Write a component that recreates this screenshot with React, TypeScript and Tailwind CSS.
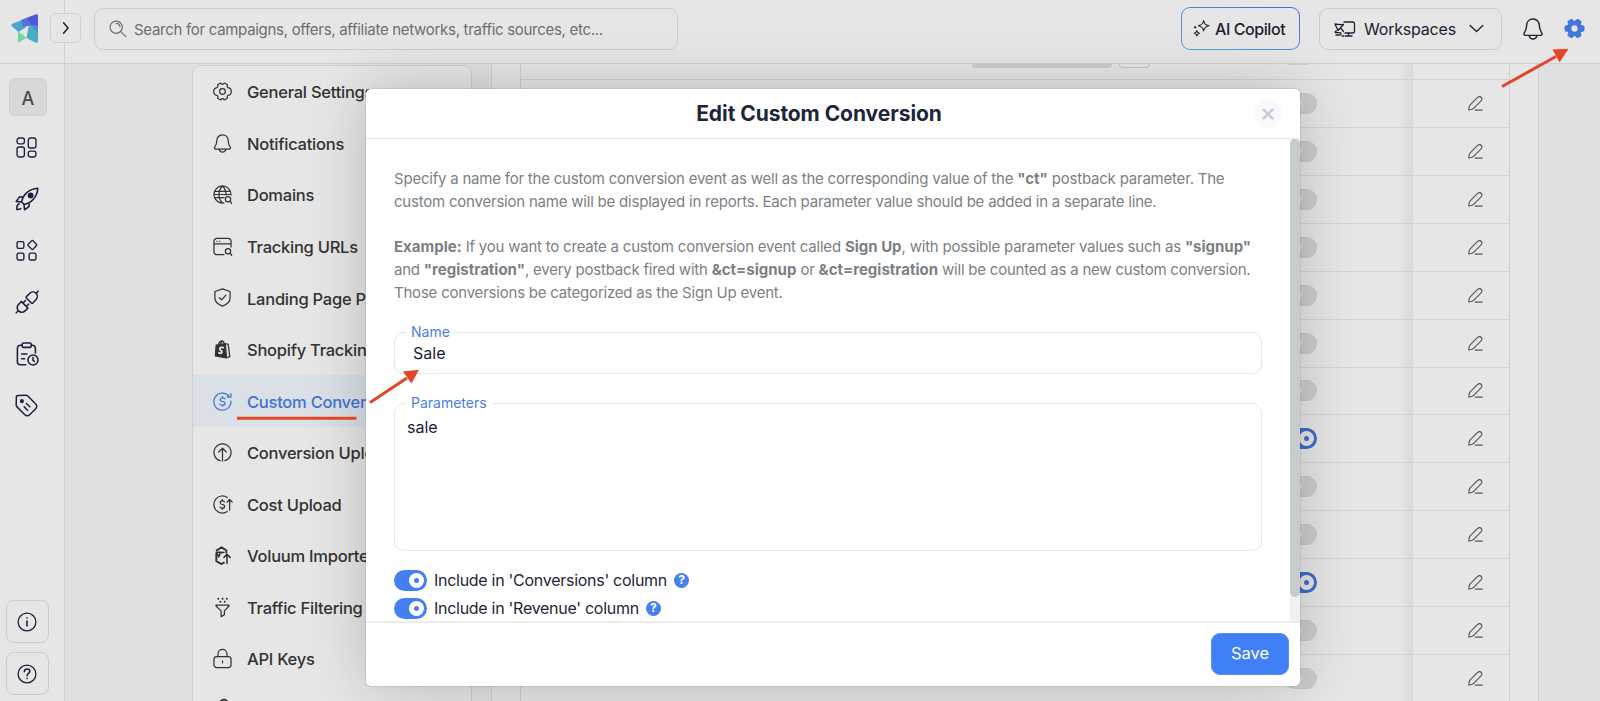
import React from 'react'
import clsx from 'clsx'

type IconProps = { className?: string; children?: React.ReactNode }

function Icon({ className = 'h-5 w-5', children }: IconProps) {
  return (
    <svg
      viewBox="0 0 20 20"
      fill="none"
      stroke="currentColor"
      strokeWidth="1.3"
      strokeLinecap="round"
      strokeLinejoin="round"
      className={clsx('shrink-0 overflow-visible', className)}
    >
      {children}
    </svg>
  )
}

const Bell = ({ className }: IconProps) => (
  <Icon className={className}>
    <path d="M10 .9c-3.500 0-5.800 2.600-5.800 6 0 3.600-1.200 5.100-2.200 6.800-.6 1.100-.1 2.100 1.100 2.100h13.800c1.200 0 1.700-1 1.100-2.100-1-1.700-2.200-3.200-2.200-6.800 0-3.400-2.300-6-5.800-6Z" />
    <path d="M6.500 16.200c.5 1.800 1.800 2.900 3.500 2.900s3-1.100 3.500-2.900" />
  </Icon>
)

const Pencil = () => (
  <svg viewBox="0 0 15 15" fill="none" stroke="currentColor" strokeWidth="1.15" strokeLinecap="round" strokeLinejoin="round" className="h-[15px] w-[15px] text-[#555]">
    <path d="M.8 14c.1-2 .1-3.700 1.200-4.900L9.300 1.700c1.200-1.200 2.800-1.400 3.800-.5 1.100 1 1 2.500-.1 3.700l-7.300 7.400C4.500 13.500 2.800 13.900.8 14Z" />
    <path d="M7.300 14.100h6.900" />
  </svg>
)

const menu = [
  {
    label: 'General Settings',
    icon: (
      <>
        <path d="M7.700 1.300h.7c.7 1.500 2.500 1.500 3.200 0h.7l2.500 1.400.4.500c-.9 1.500 0 3 1.700 3 .6.200 1.900 1.200 2.300 2.700v2.200c-.4 1.500-1.700 2.500-2.300 2.700-1.700 0-2.600 1.500-1.700 3l-.4.500-2.500 1.400h-.7c-.7-1.500-2.500-1.500-3.200 0h-.7l-2.500-1.400-.4-.5c.9-1.500 0-3-1.700-3-.6-.2-1.900-1.200-2.300-2.700V8.900c.4-1.500 1.700-2.500 2.300-2.700 1.700 0 2.600-1.500 1.700-3l.4-.5 2.500-1.400Z" />
        <circle cx="10" cy="10" r="3" />
      </>
    ),
  },
  {
    label: 'Notifications',
    icon: (
      <>
        <path d="M10 .8c-3.600 0-6 2.700-6 6.200 0 3.500-1.200 5-2.200 6.700-.6 1.100-.1 2.100 1.100 2.100h14.200c1.200 0 1.700-1 1.100-2.100C17.200 12 16 10.500 16 7c0-3.500-2.400-6.200-6-6.200Z" />
        <path d="M6.500 16.200c.5 1.800 1.800 2.900 3.500 2.900s3-1.100 3.500-2.900" />
      </>
    ),
  },
  {
    label: 'Domains',
    icon: (
      <>
        <path d="M11.500 18.900A9 9 0 1 1 19 10.500M10 1c-5 5-5 13 0 18M10 1c2.500 2.500 3.800 5.700 3.800 9.500M2 6.700h16M2 13.300h9.500M1 10h18" />
        <circle cx="15.800" cy="15" r="2.800" />
        <path d="m18 17.200 1.600 2" />
      </>
    ),
  },
  {
    label: 'Tracking URLs',
    icon: (
      <>
        <path d="M19 10.500V4.500a3 3 0 0 0-3-3H4a3 3 0 0 0-3 3v11a3 3 0 0 0 3 3h7.500M1 7.300h18M4 4.500h.2M7 4.500h.2" />
        <circle cx="15.800" cy="15" r="2.800" />
        <path d="m18 17.200 1.600 2" />
      </>
    ),
  },
  {
    label: 'Landing Page Protection',
    icon: (
      <>
        <path d="m10 1 8 2.700v6.800c0 4.200-3.600 7-8 8.500-4.400-1.500-8-4.300-8-8.500V3.700L10 1Z" />
        <path d="m6.700 10.200 2.400 2.300 4.400-5" />
      </>
    ),
  },
  {
    label: 'Shopify Tracking',
    icon: (
      <>
        <path d="m3.300 5.300 9.700-1.500 1.200 15-11.700-2Z" fill="currentColor" />
        <path d="m14 4 2 .6 1.700 12.900-3 1M5.800 4.500C6.500 2.300 8 1 9.500 1s2 1.500 2.300 2.800M8 4c.3-1.600 1.500-2.600 2.700-2.200" />
        <path d="M10.800 8c-4-.8-4.700 1.700-2.600 3 2.400 1.500.8 4-2 2.500" stroke="#e6e6e6" strokeWidth="1.800" />
      </>
    ),
  },
  {
    label: 'Custom Conversions',
    active: true,
    icon: (
      <path d="M16.700 4.200A9 9 0 1 0 18.900 9.500M18.800 1.700v3.800h-3.900M12.600 7.200c-.7-.8-1.600-1-2.600-1-3.300 0-3.300 3.500 0 3.800 3.500.3 3.500 3.800 0 3.800-1.100 0-2-.3-2.700-1.100M10 4.800v1.400M10 13.800v1.400" />
    ),
  },
  {
    label: 'Conversion Upload',
    icon: <path d="M7.500 18.600a9 9 0 1 1 5 0M10 19V6M6 9.500l4-4 4 4" />,
  },
  {
    label: 'Cost Upload',
    icon: <path d="M15 2.600A9 9 0 1 0 15 17.400M17.500 16V5M14.800 7.500l2.700-2.800 2.700 2.800M12 7.200c-.7-.8-1.300-1-2.200-1-3 0-3 3.500 0 3.800 3.200.3 3.200 3.800 0 3.800-1 0-1.700-.3-2.400-1.100M9.800 4.800v1.400M9.800 13.800v1.400" />,
  },
  {
    label: 'Voluum Importer',
    icon: (
      <>
        <path d="m4 4.500 5-3 5 3v2.500M3.500 8v8l5.500 3 2.500-1.500" strokeWidth="2" />
        <path d="m3.500 6.500 2.500 5 1.500-4 4-.8M4 6.500h5M14.700 18.500V9M11.500 12l3.200-3.200L18 12" strokeWidth="1.600" />
      </>
    ),
  },
  {
    label: 'Traffic Filtering',
    icon: (
      <>
        <path d="M3.500 7.500h13c.5 0 .6.500.3.900L12 13.500v4l-3.500 2.200v-6.200L3.200 8.400c-.3-.4-.2-.9.300-.9Z" />
        <path d="M5.500.8h.1M10 .8h.1M14.500.8h.1M7.700 4h.1M12.300 4h.1" strokeWidth="2" />
      </>
    ),
  },
  {
    label: 'API Keys',
    icon: (
      <>
        <rect x="1" y="8" width="18" height="11.600" rx="3" />
        <path d="M5.300 8V5.200a4.700 4.700 0 0 1 9.400 0V8M10 12.500v2" />
      </>
    ),
  },
  {
    label: '',
    icon: <circle cx="11.500" cy="2.500" r="4" strokeWidth="1.800" />,
  },
]

const navIcons = [
  <Icon key="dash" className="h-[21px] w-[21px]">
    <rect x="1" y="1" width="7" height="5.500" rx="2" />
    <rect x="1" y="9.500" width="7" height="9.500" rx="2" />
    <rect x="11.700" y="1" width="7.300" height="9.500" rx="2" />
    <rect x="11.700" y="13.500" width="7.300" height="5.500" rx="2" />
  </Icon>,
  <Icon key="rocket" className="h-6 w-6">
    <path d="M5.500 12.500c1-6 6-11 13.500-11.500-.5 7.500-5.500 12.500-11.500 13.500ZM6.200 8.300 3.800 8.200 1 12l4.500.5M11.700 13.800l.1 2.400L8 19l-.5-4.500M3.500 14c-2 .8-2.200 2.500-2 4.700 1.700.1 2.600-.2 3.300-.8" />
    <circle cx="13" cy="7" r="1.800" fill="currentColor" />
  </Icon>,
  <Icon key="apps" className="h-[21px] w-[21px]">
    <rect x="1" y="1.500" width="6.500" height="6.500" rx="1.500" />
    <rect x="1" y="12.500" width="6.500" height="6.500" rx="1.500" />
    <rect x="12.500" y="12.500" width="6.500" height="6.500" rx="1.500" />
    <path d="m15 .8-3.400 3.300c-.4.4-.4.9 0 1.300L15 8.700c.4.400 1 .4 1.400 0l3-3.300c.4-.4.4-.9 0-1.300l-3-3.300c-.4-.4-1-.4-1.400 0Z" />
  </Icon>,
  <Icon key="plug" className="h-6 w-6">
    <path d="M9.500 5.500 12.400 2.700c1.700-1.600 4-1.200 5.200 0s1.500 3.500 0 5.200L14.900 10.800c-.4.400-.8.400-1.200 0L9.500 6.700c-.4-.4-.4-.8 0-1.200ZM17.500 2.800 19.300 1M5.200 9.500l5.600 5.600-2.400 2.300c-1.700 1.700-4 1.400-5.400 0s-1.700-3.700 0-5.400l2.200-2.500ZM2.800 17.300 1 19M6.700 10.800l2-2M9.500 13.700l2-2" />
  </Icon>,
  <Icon key="clipboard" className="h-6 w-6">
    <path d="M5.700 2.700H4.500a2.500 2.500 0 0 0-2.500 2.500v11.300A2.500 2.500 0 0 0 4.500 19h4.500M13.700 2.700h.8A2.500 2.500 0 0 1 17 5.200v4M5.500 10h4.500M5.500 14h2.500" />
    <rect x="6" y=".9" width="7.500" height="3.600" rx="1" />
    <circle cx="15" cy="15" r="4.200" />
    <path d="M15 13v2.300l1.200.8" />
  </Icon>,
  <Icon key="tag" className="h-[23px] w-[23px]">
    <path d="M1.200 2.600 1 9.200c0 .9.300 1.600.9 2.200l6.700 6.700c1.200 1.200 2.900 1.200 4.100 0l5.300-5.300c1.200-1.200 1.200-2.900 0-4.100L11.400 2C10.800 1.400 10 1.100 9.200 1.100l-6.500.1c-.9 0-1.500.6-1.500 1.400ZM10 8.200l2.900 2.900M8 11.200l2.900 2.900" />
    <circle cx="6" cy="6.200" r="1.100" fill="currentColor" />
  </Icon>,
]

function Logo() {
  return (
    <svg viewBox="0 0 28 30" className="h-[30px] w-[28px]">
      <path d="M.5 12C0 11 1 10 2 9.500L16 4l-1.500 9.500-7 4.500Z" fill="#4ba5c9" />
      <path d="M14.500 4.200 24.500.5C26.500-.2 27 .8 27 2v11L17 12Z" fill="#4f55d8" />
      <path d="m10 6 6-2.200 4.500 7.200-8 2Z" fill="#5472d8" />
      <path d="m17.500 12.500 9.500-.5v15c0 1.800-1.500 2.200-2.800 1.400L15.500 24Z" fill="#4bacc6" />
      <path d="m18.500 11 8.500.5V19Z" fill="#4b8fd0" />
      <path d="m7 17.500 8.500 6-7 4.700c-1.200.5-1.800-.2-1.700-1.200Z" fill="#72d69c" />
    </svg>
  )
}

function Switch({ on, faded }: { on?: boolean; faded?: boolean }) {
  if (!on) {
    return (
      <span className="flex h-[21px] w-[33px] items-center rounded-full border border-[#c6c6c6] bg-[#cdcdcd] px-0.5">
        <span className="h-[15px] w-[15px] rounded-full bg-[#dcdcdc]"></span>
      </span>
    )
  }
  return (
    <span className={clsx('flex h-[21px] w-[33px] shrink-0 items-center justify-end rounded-full px-[3px]', faded ? 'bg-[#3d6cc8]' : 'bg-[#4480f4]')}>
      <span className={clsx('flex h-[15px] w-[15px] items-center justify-center rounded-full', faded ? 'bg-[#e4e4e4]' : 'bg-white')}>
        <span className={clsx('h-[5px] w-[5px] rounded-full', faded ? 'bg-[#3d6cc8]' : 'bg-[#4480f4]')}></span>
      </span>
    </span>
  )
}

function Header() {
  return (
    <header className="flex h-16 shrink-0 items-start border-b border-[#cfcfcf] bg-[#e6e6e6]">
      <div className="flex h-[63px] w-[65px] shrink-0 border-r border-[#cfd0d1] pl-[11px] pt-3.5">
        <Logo />
      </div>
      <button className="-ml-[15px] mt-[13px] flex h-[30px] w-[31px] shrink-0 items-center justify-center rounded-md border border-[#cfcfcf] bg-[#e6e6e6] text-[#1c2233]">
        <Icon className="h-[16px] w-[16px]"><path d="m7 3.500 5.500 6.500L7 16.500" strokeWidth="1.900" /></Icon>
      </button>
      <div className="ml-[13px] mt-2 flex h-[42px] w-[584px] items-center rounded-[9px] border border-[#cccccc] pl-3.5 text-[#6e6e6e]">
        <Icon className="h-[18px] w-[18px]">
          <circle cx="8" cy="8" r="6.800" />
          <path d="m13 13 5.700 5.500M8 3.700c2.300 0 4 1.500 4.300 3.800" />
        </Icon>
        <span className="ml-[7px] whitespace-nowrap pt-0.5 text-[15px] tracking-[-0.295px]">Search for campaigns, offers, affiliate networks, traffic sources, etc...</span>
      </div>
      <div className="ml-auto mt-[7px] flex h-[43px] items-center pr-[15px] text-[#1c2233]">
        <div className="h-[43px] w-[119px] rounded-[9px] bg-linear-to-tr from-[#4fa9d0] via-[#4d8bd8] to-[#4767d2] p-px">
          <button className="flex h-full w-full items-center rounded-lg bg-[#e6e6e6] pl-[11px]">
            <Icon className="h-[17px] w-[17px]">
              <path d="M12.500.8c.8 3.700 1.900 4.800 6.300 6-4.400 1.200-5.500 2.300-6.300 6-.8-3.700-1.900-4.800-6.100-6 4.200-1.200 5.300-2.300 6.100-6ZM4.500 12.500c.4 1.900 1 2.500 3 3.100-2 .6-2.600 1.300-3 3.200-.4-1.900-1-2.600-3-3.200 2-.6 2.600-1.200 3-3.100ZM2.500 7.500v2M1.500 8.500h2" />
            </Icon>
            <span className="ml-[5px] whitespace-nowrap text-base font-medium tracking-[-0.42px]">AI Copilot</span>
          </button>
        </div>
        <button className="ml-[19px] flex h-[42px] w-[183px] items-center rounded-[9px] border border-[#cccccc] pl-[14px]">
          <svg viewBox="0 0 22 16" fill="none" stroke="currentColor" strokeWidth="1.3" strokeLinecap="round" strokeLinejoin="round" className="h-4 w-[22px]">
            <path d="M10 1h8.500a2 2 0 0 1 2 2v7a2 2 0 0 1-2 2H11M14.500 12v3M11.500 15h6.500M1 3l3 6.500L9.500 3.500 6 3.700ZM2.500 9.800c-1.500.2-1.800 1.200-1 1.800l4 .1c2 0 2 2.300 0 2.300H2M7 7.500l2.500 3M8 15h2" />
          </svg>
          <span className="ml-2 text-base tracking-[-0.2px]">Workspaces</span>
          <Icon className="ml-3 h-[17px] w-[17px]"><path d="m2.500 6.500 7.500 7 7.500-7" strokeWidth="1.600" /></Icon>
        </button>
        <Bell className="ml-[19.5px] h-[22px] w-[22px]" />
        <svg viewBox="0 0 20 20" className="ml-[20.5px] h-[21px] w-[21px] text-[#4376dc]" fill="currentColor">
          <circle cx="10" cy="10" r="7.300" />
          <rect x="7" y=".5" width="6" height="19" rx="1.800" transform="rotate(30 10 10)" />
          <rect x="7" y=".5" width="6" height="19" rx="1.800" transform="rotate(90 10 10)" />
          <rect x="7" y=".5" width="6" height="19" rx="1.800" transform="rotate(150 10 10)" />
          <circle cx="10" cy="10" r="3" fill="#e6e6e6" />
        </svg>
      </div>
    </header>
  )
}

function Sidebar() {
  return (
    <aside className="flex w-[65px] shrink-0 flex-col border-r border-[#cfd0d1] bg-[#e6e6e6] text-[#1c2040]">
      <div className="ml-[9px] mt-3.5 flex h-[38px] w-[38px] items-center justify-center rounded-md border border-[#d0d0d0] bg-[#d8d8d8] pt-[3px] text-[18px] font-medium text-[#4a4a4a]">A</div>
      <nav className="mt-[6px] flex w-[53px] flex-col">
        {navIcons.map((icon, i) => (
          <a key={i} className="flex h-[51.5px] items-center justify-center">{icon}</a>
        ))}
      </nav>
      <div className="mb-[6px] ml-1.5 mt-auto flex flex-col gap-[9px]">
        <button className="flex h-[43px] w-[43px] items-center justify-center rounded-lg border border-[#cccccc] pr-px">
          <Icon><circle cx="10" cy="10" r="8.900" /><path d="M10 9v5M10 6v.1" strokeWidth="1.600" /></Icon>
        </button>
        <button className="flex h-[43px] w-[43px] items-center justify-center rounded-lg border border-[#cccccc] pr-px">
          <Icon><circle cx="10" cy="10" r="8.900" /><path d="M7.300 7.700C7.500 4 13 4.200 12.800 7.500c-.1 2-2.700 2-2.700 4.200M10 14.300v.1" strokeWidth="1.600" /></Icon>
        </button>
      </div>
    </aside>
  )
}

function SettingsMenu() {
  return (
    <div className="ml-[127px] mt-px h-[700px] w-[280px] shrink-0 overflow-hidden rounded-t-lg border border-[#cecfd0] bg-[#e6e6e6]">
      {menu.map((item, i) => (
        <div
          key={i}
          className={clsx(
            'flex h-[51.55px] items-center whitespace-nowrap pl-5 text-[16.5px] font-medium tracking-[-0.25px]',
            item.active ? 'bg-[#dae0e6] text-[#4173d8]' : 'text-[#333]'
          )}
        >
          <Icon className="h-[19px] w-[19px]">{item.icon}</Icon>
          <span className="ml-[15px] pt-0.5">{item.label}</span>
        </div>
      ))}
    </div>
  )
}

const rows = [false, false, false, false, false, false, false, true, false, false, true, false, false]

function ConversionsTable() {
  return (
    <div className="ml-[19px] w-[1048px] shrink-0 border-x border-[#cecfd0] bg-[#e6e6e6] pl-7">
      <div className="w-[990px] border-x border-[#cecfd0]">
        <div className="flex h-4 items-start border-b border-[#d3d4d4]">
          <div className="ml-[451px] h-1 w-[140px] rounded-b-md bg-[#cdcdcd]"></div>
          <div className="ml-[7px] h-1 w-[31px] rounded-b-md border border-t-0 border-[#c4c4c4]"></div>
          <div className="ml-[138px] h-px w-5 bg-[#cdcdcd]"></div>
          <div className="ml-auto h-4 w-3 bg-linear-to-r from-transparent to-[#d8d8d8]"></div>
          <div className="w-[96px]"></div>
        </div>
        {rows.map((on, i) => (
          <div key={i} className="flex h-[47.93px] border-b border-[#d3d4d4]">
            <div className="flex flex-1 items-center justify-end pr-[84px]">
              <Switch on={on} faded />
            </div>
            <div className="w-3 bg-linear-to-r from-transparent to-[#d8d8d8]"></div>
            <div className="flex w-24 items-center pl-[55px]">
              <Pencil />
            </div>
          </div>
        ))}
      </div>
    </div>
  )
}

function Field({ label, className, children }: { label: string; className?: string; children: React.ReactNode }) {
  return (
    <fieldset className={clsx('w-[868px] rounded-[10px] border border-[#e4e6e8]', className)}>
      <legend className="ml-[11px] h-[17px] px-[5px] text-sm leading-[15px] text-[#4a7fe0]">{label}</legend>
      {children}
    </fieldset>
  )
}

function ToggleRow({ text }: { text: string }) {
  return (
    <label className="flex h-[21px] items-center whitespace-nowrap text-base text-[#1f2439]">
      <Switch on />
      <span className="ml-[7px] tracking-[-0.28px]">{text}</span>
      <span className="ml-[7px] flex h-[15px] w-[15px] items-center justify-center rounded-full bg-[#4480f0] text-xs font-bold text-white">?</span>
    </label>
  )
}

const B = ({ children }: { children: React.ReactNode }) => <b className="tracking-normal">{children}</b>

function EditModal() {
  return (
    <div className="absolute left-[366px] top-[89px] flex h-[597px] w-[934px] flex-col overflow-hidden rounded-[5px] bg-white shadow-[0_0_60px_rgba(0,0,0,0.2),0_0_2px_rgba(0,0,0,0.25)]">
      <div className="flex h-[50px] shrink-0 items-center border-b border-[#e4e5e6] pr-[18px]">
        <h2 className="ml-[18px] flex-1 text-center text-[21px] font-bold tracking-[-0.06px] text-[#20263a]">Edit Custom Conversion</h2>
        <button className="flex h-7 w-7 items-center justify-center rounded-full bg-[#f8f9fb] text-[#c9cbdc]">
          <Icon className="h-4 w-4"><path d="m3.500 3.500 13 13M16.500 3.500l-13 13" strokeWidth="3" strokeLinecap="butt" /></Icon>
        </button>
      </div>
      <div className="flex h-[482px] shrink-0">
        <div className="flex-1 pl-7 pt-[29px] text-[15px] leading-[22.8px] text-[#7c7f84]">
          <p className="whitespace-nowrap tracking-[-0.215px]">
            Specify a name for the custom conversion event as well as the corresponding value of the <B>"ct"</B> postback parameter. The<br />
            custom conversion name will be displayed in reports. Each parameter value should be added in a separate line.
          </p>
          <p className="mt-[22.8px] whitespace-nowrap tracking-[-0.215px]">
            <B>Example:</B> If you want to create a custom conversion event called <B>Sign Up</B>, with possible parameter values such as <B>"signup"</B><br />
            and <B>"registration"</B>, every postback fired with <B>&amp;ct=signup</B> or <B>&amp;ct=registration</B> will be counted as a new custom conversion.<br />
            Those conversions be categorized as the Sign Up event.
          </p>
          <Field label="Name" className="mt-[19px] h-[50px]">
            <div className="pl-[18px] text-base leading-[24px] text-[#1a1d33]">Sale</div>
          </Field>
          <Field label="Parameters" className="mt-[21px] h-[156px]">
            <div className="pl-3 pt-[3px] text-base leading-[25px] text-[#1a1d33]">sale</div>
          </Field>
          <div className="mt-[19px] flex flex-col gap-[7px]">
            <ToggleRow text="Include in 'Conversions' column" />
            <ToggleRow text="Include in 'Revenue' column" />
          </div>
        </div>
        <div className="w-2.5 bg-[#f0f2f2]">
          <div className="h-[458px] rounded-full bg-[#c6cbcc]"></div>
        </div>
      </div>
      <div className="flex flex-1 items-center justify-end border-t-2 border-[#ebecec] pb-0.5 pr-[11px]">
        <button className="h-[42px] w-[78px] rounded-[9px] border border-[#5c8df0] bg-[#4080f6] text-[16.5px] text-white">Save</button>
      </div>
    </div>
  )
}

function Annotations() {
  return (
    <svg viewBox="0 0 1600 701" className="pointer-events-none absolute left-0 top-0 h-[701px] w-[1600px]" stroke="#e2452c" fill="#e8442a">
      <path d="M237 418.300h119.500" strokeWidth="3" />
      <path d="m370 402.500 37-24.500M1502 86.500l54-30" strokeWidth="3" />
      <path d="m419 369.800-16 1.700 8.500 12ZM1568.500 48.800l-16 .7 7 13Z" stroke="none" />
    </svg>
  )
}

export default function App() {
  return (
    <div className="relative flex h-[701px] w-[1600px] flex-col overflow-hidden bg-[#dee0e2] font-['Inter','Liberation_Sans',sans-serif]">
      <Header />
      <div className="flex h-[637px]">
        <Sidebar />
        <SettingsMenu />
        <ConversionsTable />
      </div>
      <EditModal />
      <Annotations />
    </div>
  )
}
